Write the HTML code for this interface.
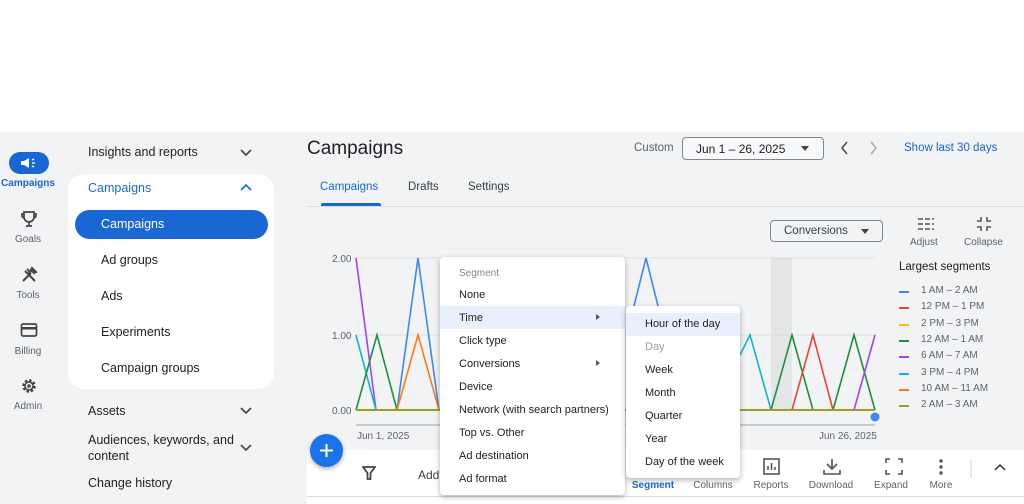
<!DOCTYPE html>
<html><head><style>
*{margin:0;padding:0;box-sizing:border-box}
body{width:1024px;height:504px;overflow:hidden;background:#fff;font-family:"Liberation Sans",sans-serif;position:relative;color:#202124}
.a{position:absolute}
.g{background:#f1f3f4}
.rail div{position:absolute;width:56px;text-align:center;font-size:10px;color:#5f6368}
.nav{font-size:12.5px;color:#202124}
.menu{background:#fff;box-shadow:0 2px 6px rgba(0,0,0,.3);border-radius:4px}
.mi{position:absolute;font-size:11px;color:#202124}
.leg div{position:absolute;font-size:10px;color:#5f6368}
.leg i{position:absolute;width:10px;height:2px;left:-22px;top:6px}
.tb div{position:absolute;font-size:10px;color:#5f6368;text-align:center;width:50px}
</style></head><body>
<div class="a g" style="left:0;top:132px;width:1024px;height:372px"></div>
<!-- rail -->
<div class="rail">
<div class="a" style="left:9px;top:152px;width:40px;height:22px;background:#1967d2;border-radius:11px"></div>
<svg class="a" style="left:19px;top:156px" width="20" height="14" viewBox="0 0 20 14"><path d="M2 5h3l5-3v10l-5-3H2z M5 9l1 3" fill="#fff"/><path d="M13 4l2-1M13 7h3M13 10l2 1" stroke="#fff" stroke-width="1.3"/></svg>
<div style="left:0;top:178px;color:#1967d2;font-weight:bold;font-size:10px">Campaigns</div>
<svg class="a" style="left:20px;top:210px" width="18" height="18" viewBox="0 0 18 18"><path d="M4 2h10v5a5 5 0 0 1-10 0z M4 4H2v2a3 3 0 0 0 2 2 M14 4h2v2a3 3 0 0 1-2 2 M9 12v3 M6 16h6" fill="none" stroke="#444" stroke-width="1.7"/></svg>
<div style="left:0;top:234px">Goals</div>
<svg class="a" style="left:20px;top:266px" width="18" height="18" viewBox="0 0 18 18"><path d="M3 15L11 7M7 3l3 3-2 2-3-3M15 15L9 9M12 2l4 4-2 1-3-3z" stroke="#444" stroke-width="2" fill="none"/></svg>
<div style="left:0;top:290px">Tools</div>
<svg class="a" style="left:20px;top:322px" width="18" height="16" viewBox="0 0 18 16"><rect x="1.5" y="2" width="15" height="12" rx="1.5" fill="none" stroke="#444" stroke-width="1.7"/><rect x="1.5" y="5" width="15" height="2.5" fill="#444"/></svg>
<div style="left:0;top:346px">Billing</div>
<svg class="a" style="left:20px;top:377px" width="18" height="18" viewBox="0 0 18 18"><circle cx="9" cy="9" r="5.5" fill="none" stroke="#444" stroke-width="2.5" stroke-dasharray="2.5 1.8"/><circle cx="9" cy="9" r="4" fill="none" stroke="#444" stroke-width="1.5"/><circle cx="9" cy="9" r="1.8" fill="#444"/></svg>
<div style="left:0;top:401px">Admin</div>
</div>
<!-- nav -->
<div class="nav">
<div class="a" style="left:88px;top:145px">Insights and reports</div>
<div class="a" style="left:68px;top:174px;width:206px;height:215px;background:#fff;border-radius:16px"></div>
<div class="a" style="left:88px;top:181px;color:#1967d2">Campaigns</div>
<div class="a" style="left:75px;top:210px;width:193px;height:29px;background:#1967d2;border-radius:15px"></div>
<div class="a" style="left:101px;top:217px;color:#fff">Campaigns</div>
<div class="a" style="left:101px;top:253px">Ad groups</div>
<div class="a" style="left:101px;top:289px">Ads</div>
<div class="a" style="left:101px;top:325px">Experiments</div>
<div class="a" style="left:101px;top:361px">Campaign groups</div>
<div class="a" style="left:88px;top:404px">Assets</div>
<div class="a" style="left:88px;top:432px;line-height:16px">Audiences, keywords, and<br>content</div>
<div class="a" style="left:88px;top:476px">Change history</div>
<svg class="a" style="left:238px;top:146px" width="16" height="350" viewBox="0 0 16 350"><g fill="none" stroke="#444" stroke-width="1.6"><path d="M3 4l5 5 5-5"/><path d="M3 44l5-5 5 5" stroke="#1967d2"/><path d="M3 262l5 5 5-5"/><path d="M3 299l5 5 5-5"/></g></svg>
</div>
<!-- header -->
<div class="a" style="left:307px;top:138px;font-size:19px">Campaigns</div>
<div class="a" style="left:634px;top:142px;font-size:11.5px;color:#5f6368">Custom</div>
<div class="a" style="left:682px;top:137px;width:142px;height:23px;border:1px solid #80868b;border-radius:4px;background:#f8f9fa"></div>
<div class="a" style="left:696px;top:142px;font-size:12px">Jun 1 – 26, 2025</div>
<div class="a" style="left:801px;top:146px;border:4px solid transparent;border-top:5px solid #444"></div>
<svg class="a" style="left:837px;top:140px" width="50" height="16"><path d="M10 2l-5 6 5 6" fill="none" stroke="#444" stroke-width="1.5"/><path d="M34 2l5 6-5 6" fill="none" stroke="#aaa" stroke-width="1.5"/></svg>
<div class="a" style="left:904px;top:142px;font-size:11.5px;color:#1967d2">Show last 30 days</div>
<div class="a" style="left:320px;top:181px;font-size:11.5px;color:#1967d2">Campaigns</div>
<div class="a" style="left:321px;top:203px;width:60px;height:3px;background:#1967d2;border-radius:2px 2px 0 0"></div>
<div class="a" style="left:408px;top:181px;font-size:11.5px;color:#3c4043">Drafts</div>
<div class="a" style="left:468px;top:181px;font-size:11.5px;color:#3c4043">Settings</div>
<div class="a" style="left:307px;top:206px;width:717px;height:1px;background:#dadce0"></div>
<div class="a" style="left:770px;top:220px;width:113px;height:22px;border:1px solid #80868b;border-radius:4px"></div>
<div class="a" style="left:784px;top:225px;font-size:11.5px;color:#3c4043">Conversions</div>
<div class="a" style="left:861px;top:229px;border:4px solid transparent;border-top:5px solid #444"></div>
<svg class="a" style="left:917px;top:216px" width="18" height="16"><path d="M1 3h16M1 8h16M1 13h16" stroke="#555" stroke-width="1.6" stroke-dasharray="5 2"/></svg>
<svg class="a" style="left:976px;top:216px" width="16" height="16"><path d="M5 1v4H1M11 1v4h4M5 15v-4H1M11 15v-4h4" fill="none" stroke="#555" stroke-width="1.6"/></svg>
<div class="a" style="left:910px;top:237px;font-size:10px;color:#5f6368">Adjust</div>
<div class="a" style="left:964px;top:237px;font-size:10px;color:#5f6368">Collapse</div>
<!-- chart -->
<svg class="a" style="left:300px;top:240px" width="600" height="205" viewBox="300 240 600 205">
<rect x="771" y="258" width="21" height="152" fill="#e4e5e7"/>
<path d="M356 258H875M356 335H875" stroke="#dadce0"/>
<path d="M356 425H875" stroke="#9aa0a6"/>
<g font-size="10" fill="#5f6368" font-family="Liberation Sans"><text x="332" y="262">2.00</text><text x="332" y="339">1.00</text><text x="332" y="414">0.00</text><text x="357" y="439">Jun 1, 2025</text><text x="819" y="439">Jun 26, 2025</text></g>
<g fill="none" stroke-width="1.6">
<path d="M356 258L376 410" stroke="#a142f4"/>
<path d="M356 335L376 410" stroke="#12b5cb"/>
<path d="M356 410L377 335L397 410" stroke="#1e8e3e"/>
<path d="M397 410L418 258L439 410" stroke="#4285f4"/>
<path d="M397 410L418 335L439 410" stroke="#fa7b17"/>
<path d="M633 310L646 258L659 310" stroke="#4285f4"/>
<path d="M740 355L750 335L771 410" stroke="#12b5cb"/>
<path d="M771 410L792 335L813 410" stroke="#1e8e3e"/>
<path d="M792 410L813 335L833 410" stroke="#ea4335"/>
<path d="M833 410L854 335L875 410" stroke="#1e8e3e"/>
<path d="M854 410L875 335" stroke="#a142f4"/>
<path d="M356 410H875" stroke="#9e9d24" stroke-width="2"/>
</g>
<circle cx="875" cy="417" r="4.5" fill="#4285f4"/>
</svg>
<!-- legend -->
<div class="a" style="left:899px;top:261px;font-size:11.5px;color:#202124">Largest segments</div>
<div class="leg">
<div style="left:921px;top:285px"><i style="background:#4285f4"></i>1 AM – 2 AM</div>
<div style="left:921px;top:301px"><i style="background:#ea4335"></i>12 PM – 1 PM</div>
<div style="left:921px;top:318px"><i style="background:#fbbc04"></i>2 PM – 3 PM</div>
<div style="left:921px;top:334px"><i style="background:#1e8e3e"></i>12 AM – 1 AM</div>
<div style="left:921px;top:350px"><i style="background:#a142f4"></i>6 AM – 7 AM</div>
<div style="left:921px;top:367px"><i style="background:#12b5cb"></i>3 PM – 4 PM</div>
<div style="left:921px;top:383px"><i style="background:#fa7b17"></i>10 AM – 11 AM</div>
<div style="left:921px;top:399px"><i style="background:#9e9d24"></i>2 AM – 3 AM</div>
</div>
<!-- toolbar -->
<div class="a" style="left:307px;top:450px;width:717px;height:54px;background:#fff"></div>
<div class="a" style="left:307px;top:496px;width:717px;height:1px;background:#dadce0"></div>
<svg class="a" style="left:362px;top:466px" width="14" height="14"><path d="M1 1h12L8.5 7v6h-3V7z" fill="none" stroke="#444" stroke-width="1.8"/></svg>
<div class="a" style="left:418px;top:468px;font-size:12px;color:#3c4043">Add</div>
<div class="a" style="left:310px;top:434px;width:33px;height:33px;border-radius:50%;background:#1a73e8;box-shadow:0 2px 4px rgba(0,0,0,.3)"></div>
<svg class="a" style="left:318px;top:442px" width="17" height="17"><path d="M8.5 2v13M2 8.5h13" stroke="#fff" stroke-width="2"/></svg>
<div class="tb">
<div style="left:628px;top:480px;color:#1967d2;font-weight:bold">Segment</div>
<div style="left:688px;top:480px">Columns</div>
<div style="left:746px;top:480px">Reports</div>
<div style="left:806px;top:480px">Download</div>
<div style="left:866px;top:480px">Expand</div>
<div style="left:916px;top:480px">More</div>
</div>
<svg class="a" style="left:760px;top:458px" width="250" height="20"><g fill="none" stroke="#555" stroke-width="1.6"><rect x="4" y="1" width="15" height="15"/><path d="M8 12V8M11.5 12V5M15 12V9"/><path d="M72 1v10M67 6l5 5 5-5M64 12v4h16v-4"/><path d="M126 5V1h4M138 1h4v4M126 12v4h4M138 16h4v-4"/></g><g fill="#555"><circle cx="181" cy="3" r="1.7"/><circle cx="181" cy="9" r="1.7"/><circle cx="181" cy="15" r="1.7"/></g><path d="M211 2v26" stroke="#ccc"/><path d="M235 12l5-5 5 5" fill="none" stroke="#444" stroke-width="1.6"/></svg>
<!-- menu -->
<div class="a menu" style="left:440px;top:257px;width:185px;height:238px"></div>
<div class="a" style="left:440px;top:306px;width:185px;height:23px;background:#e8f0fe"></div>
<div class="mi" style="left:459px;top:268px;color:#80868b;font-size:10px">Segment</div>
<div class="mi" style="left:459px;top:289px">None</div>
<div class="mi" style="left:459px;top:312px">Time</div>
<div class="mi" style="left:459px;top:335px">Click type</div>
<div class="mi" style="left:459px;top:358px">Conversions</div>
<div class="mi" style="left:459px;top:381px">Device</div>
<div class="mi" style="left:459px;top:404px">Network (with search partners)</div>
<div class="mi" style="left:459px;top:427px">Top vs. Other</div>
<div class="mi" style="left:459px;top:450px">Ad destination</div>
<div class="mi" style="left:459px;top:473px">Ad format</div>
<div class="a" style="left:596px;top:314px;border:3px solid transparent;border-left:4px solid #555"></div>
<div class="a" style="left:596px;top:360px;border:3px solid transparent;border-left:4px solid #555"></div>
<div class="a menu" style="left:626px;top:306px;width:114px;height:172px"></div>
<div class="a" style="left:626px;top:313px;width:114px;height:23px;background:#e8f0fe"></div>
<div class="mi" style="left:645px;top:318px">Hour of the day</div>
<div class="mi" style="left:645px;top:341px;color:#9aa0a6">Day</div>
<div class="mi" style="left:645px;top:364px">Week</div>
<div class="mi" style="left:645px;top:387px">Month</div>
<div class="mi" style="left:645px;top:410px">Quarter</div>
<div class="mi" style="left:645px;top:433px">Year</div>
<div class="mi" style="left:645px;top:456px">Day of the week</div>
</body></html>
